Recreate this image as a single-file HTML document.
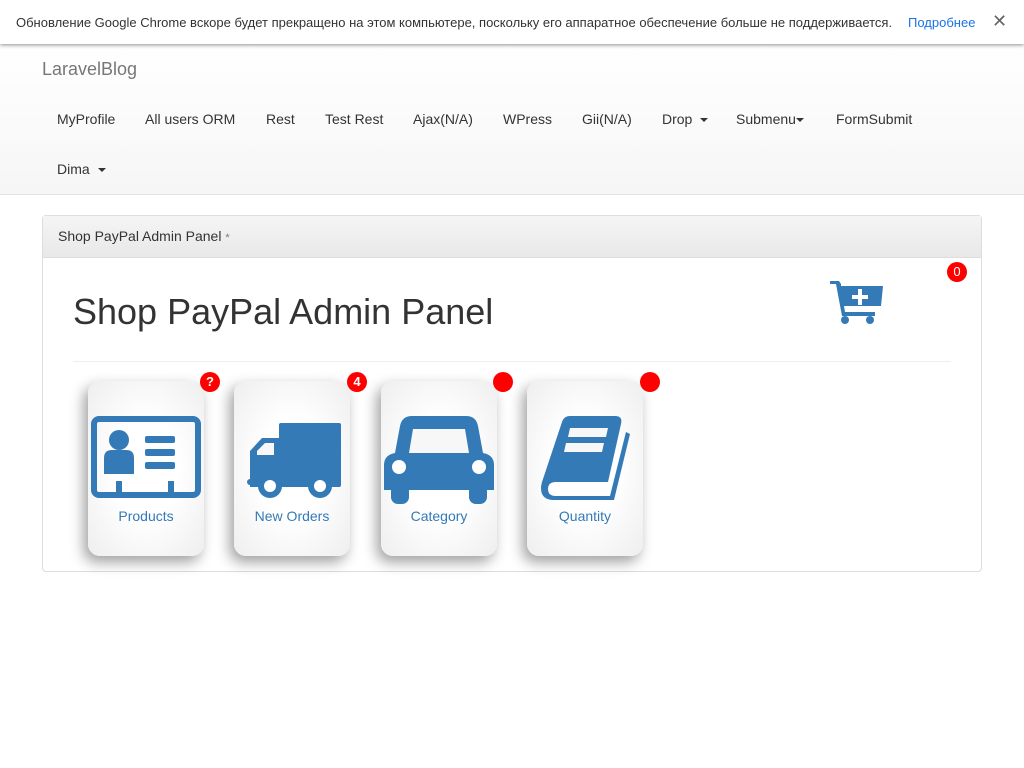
<!DOCTYPE html>
<html><head><meta charset="utf-8"><style>
*{box-sizing:border-box}
body{margin:0;width:1024px;height:768px;background:#fff;font-family:"Liberation Sans",sans-serif;position:relative;overflow:hidden}
.top{position:absolute;left:0;top:0;width:1024px;height:44px;background:#fff;box-shadow:0 1px 4px rgba(0,0,0,.45);z-index:2;font-size:13px;color:#333}
.top span{position:absolute;top:15px}
.nav{position:absolute;left:0;top:44px;width:1024px;height:151px;background:linear-gradient(#fff,#f6f6f6);border-bottom:1px solid #e2e2e2}
.brand{position:absolute;left:42px;top:15px;font-size:18px;color:#777}
.ni{position:absolute;font-size:14px;color:#333}
.caret{display:inline-block;width:0;height:0;border-top:4px solid #333;border-left:4px solid transparent;border-right:4px solid transparent;vertical-align:middle;margin-left:4px}
.panel{position:absolute;left:42px;top:215px;width:940px;height:357px;border:1px solid #ddd;border-radius:4px}
.ph{height:42px;background:linear-gradient(#f5f5f5,#e8e8e8);border-bottom:1px solid #ddd;font-size:14px;color:#333;padding:12px 15px}
h1{position:absolute;left:30px;top:75px;margin:0;font-size:36px;font-weight:normal;color:#333}
.hr{position:absolute;left:30px;top:145px;width:878px;border-top:1px solid #eee}
.card{position:absolute;top:165px;width:116px;height:175px;border-radius:12px;background:radial-gradient(ellipse at center,#fff 40%,#eee 100%);box-shadow:-4px 6px 14px rgba(0,0,0,.38)}
.card .l{position:absolute;left:0;width:100%;text-align:center;top:127px;font-size:14px;color:#337ab7}
.card svg{position:absolute}
.b{position:absolute;width:20px;height:20px;border-radius:50%;background:#f00;color:#fff;font-size:13px;text-align:center;line-height:20px;font-weight:bold}
</style></head><body>
<div class="top"><span style="left:16px">Обновление Google Chrome вскоре будет прекращено на этом компьютере, поскольку его аппаратное обеспечение больше не поддерживается.</span><span style="left:908px;color:#1a73e8">Подробнее</span><span style="left:992px;top:11px;font-size:18px;color:#666">✕</span></div>
<div class="nav">
<div class="brand">LaravelBlog</div>
<div class="ni" style="left:57px;top:67px">MyProfile</div>
<div class="ni" style="left:145px;top:67px">All users ORM</div>
<div class="ni" style="left:266px;top:67px">Rest</div>
<div class="ni" style="left:325px;top:67px">Test Rest</div>
<div class="ni" style="left:413px;top:67px">Ajax(N/A)</div>
<div class="ni" style="left:503px;top:67px">WPress</div>
<div class="ni" style="left:582px;top:67px">Gii(N/A)</div>
<div class="ni" style="left:662px;top:67px">Drop <span class="caret"></span></div>
<div class="ni" style="left:736px;top:67px">Submenu<span class="caret" style="margin-left:0"></span></div>
<div class="ni" style="left:836px;top:67px">FormSubmit</div>
<div class="ni" style="left:57px;top:117px">Dima <span class="caret"></span></div>
</div>
<div class="panel">
<div class="ph">Shop PayPal Admin Panel <span style="font-size:11px;color:#777">*</span></div>
<h1>Shop PayPal Admin Panel</h1>
<svg style="position:absolute;left:787px;top:64px" width="54" height="46" viewBox="0 0 54 46"><path d="M0 1h9l2 3v2h42l-2 20H14l1 6h30v4H12L6 4H0z" fill="#337ab7"/><circle cx="15" cy="40" r="4" fill="#337ab7"/><circle cx="40" cy="40" r="4" fill="#337ab7"/><path d="M28 9h4v6h6v4h-6v6h-4v-6h-6v-4h6z" fill="#fff"/></svg>
<div class="b" style="left:904px;top:46px;font-weight:normal">0</div>
<div class="hr"></div>
<div class="card" style="left:45px"><svg style="left:3px;top:35px" width="110" height="84" viewBox="0 0 110 84"><rect x="3" y="3" width="104" height="76" rx="5" fill="none" stroke="#337ab7" stroke-width="6"/><circle cx="28" cy="24" r="10" fill="#337ab7"/><path d="M13 42q0-8 8-8h14q8 0 8 8v16H13z" fill="#337ab7"/><rect x="54" y="20" width="30" height="7" rx="2" fill="#337ab7"/><rect x="54" y="33" width="30" height="7" rx="2" fill="#337ab7"/><rect x="54" y="46" width="30" height="7" rx="2" fill="#337ab7"/><rect x="25" y="65" width="6" height="12" fill="#337ab7"/><rect x="77" y="65" width="6" height="12" fill="#337ab7"/></svg><div class="l">Products</div></div>
<div class="b" style="left:157px;top:156px">?</div>
<div class="card" style="left:191px"><svg style="left:13px;top:42px" width="96" height="78" viewBox="0 0 96 78"><rect x="32" y="0" width="62" height="64" rx="2" fill="#337ab7"/><path d="M3 28l12-13h20v49H3z" fill="#337ab7"/><path d="M10 28l8-8h9v12H10z" fill="#f7f7f7"/><rect x="0" y="56" width="30" height="6" rx="3" fill="#337ab7"/><circle cx="23" cy="63" r="12" fill="#337ab7"/><circle cx="73" cy="63" r="12" fill="#337ab7"/><circle cx="23" cy="63" r="6" fill="#fff"/><circle cx="73" cy="63" r="6" fill="#fff"/></svg><div class="l">New Orders</div></div>
<div class="b" style="left:304px;top:156px">4</div>
<div class="card" style="left:338px"><svg style="left:3px;top:35px" width="110" height="88" viewBox="0 0 110 88"><path d="M28 0h54q10 0 12 10l5 27q11 2 11 12v25H0V49q0-10 11-12l5-27Q18 0 28 0z" fill="#337ab7"/><path d="M29 13h52l4 24H25z" fill="#f7f7f7"/><rect x="7" y="68" width="18" height="20" rx="7" fill="#337ab7"/><rect x="85" y="68" width="18" height="20" rx="7" fill="#337ab7"/><circle cx="15" cy="51" r="7" fill="#fff"/><circle cx="95" cy="51" r="7" fill="#fff"/></svg><div class="l">Category</div></div>
<div class="b" style="left:450px;top:156px"></div>
<div class="card" style="left:484px"><svg style="left:13px;top:35px" width="92" height="84" viewBox="0 0 92 84"><path d="M30 0h45q8 0 6 8L68 66H16q-8 0-8 7t8 7h54l16-64 4 2-16 66H14Q1 84 1 72q0-2 1-6L22 6q2-6 8-6z" fill="#337ab7"/><path d="M30 12h38l-2 9H28zM26 27h38l-2 9H24z" fill="#f7f7f7"/></svg><div class="l">Quantity</div></div>
<div class="b" style="left:597px;top:156px"></div>
</div>
</body></html>
